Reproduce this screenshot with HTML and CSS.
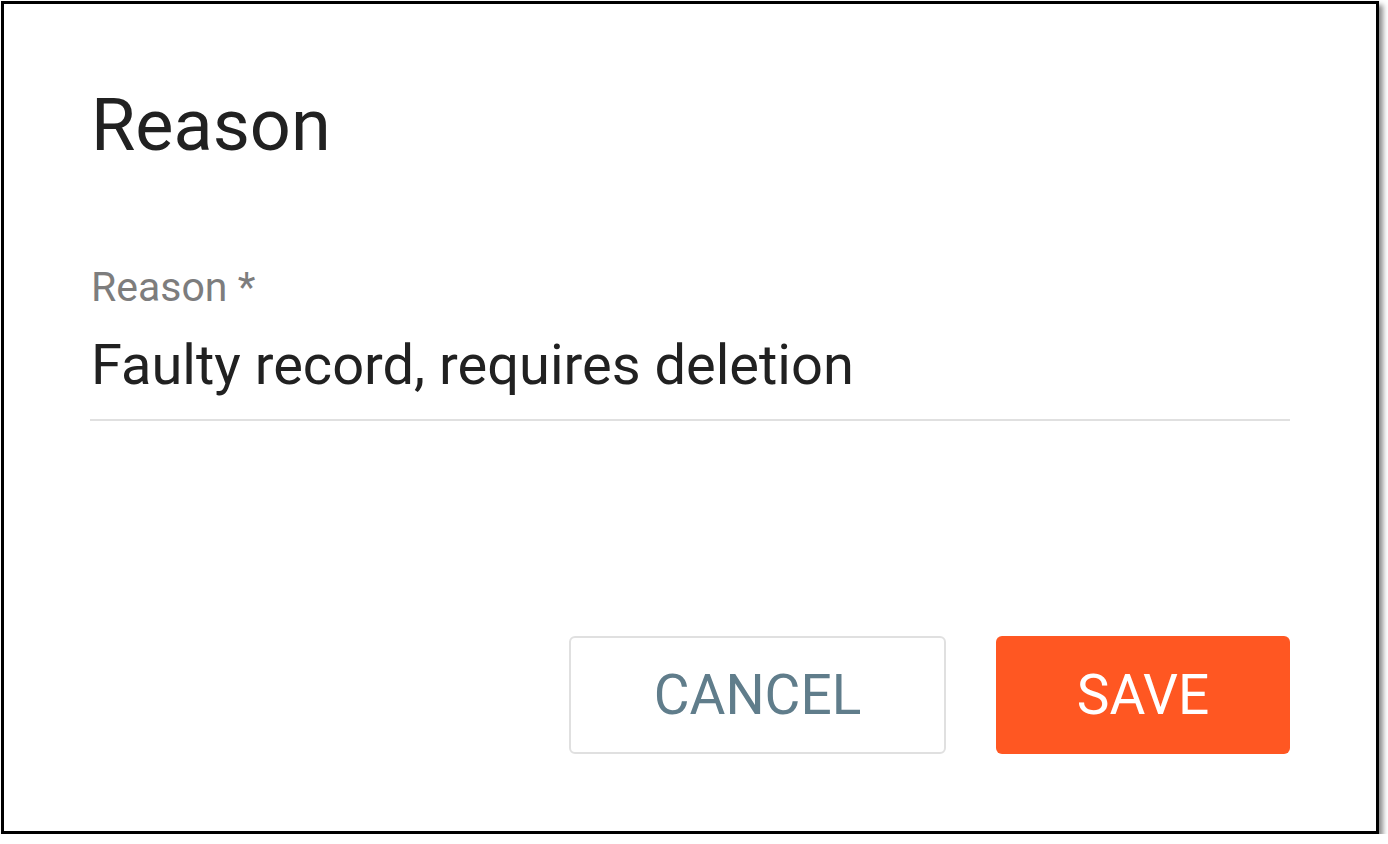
FILE: index.html
```html
<!DOCTYPE html>
<html>
<head>
<meta charset="utf-8">
<link rel="stylesheet" href="styles.css">
</head>
<body>
<div class="dialog">
  <h1 class="title">Reason</h1>
  <div class="field">
    <label class="label">Reason *</label>
    <div class="value">Faulty record, requires deletion</div>
  </div>
  <div class="actions">
    <button class="btn btn-cancel">CANCEL</button>
    <button class="btn btn-save">SAVE</button>
  </div>
</div>
</body>
</html>
```
FILE: styles.css
```css
html, body {
  margin: 0;
  padding: 0;
  background: #ffffff;
}
body {
  font-family: Roboto, "Liberation Sans", sans-serif;
  padding: 1px 0 0 1px;
}
.dialog {
  box-sizing: border-box;
  width: 1378px;
  height: 833px;
  border: 3px solid #000;
  background: #fff;
  box-shadow: 4px 4px 5px rgba(0, 0, 0, 0.45);
  padding: 86px 86px 77px 86px;
  display: flex;
  flex-direction: column;
}
.title {
  margin: 0;
  font-size: 72px;
  line-height: 72px;
  font-weight: 400;
  color: #212121;
  padding-left: 1px;
}
.field {
  margin-top: 105px;
  border-bottom: 2px solid #e0e0e0;
  padding-bottom: 26px;
}
.label {
  display: block;
  font-size: 41px;
  line-height: 40px;
  color: #7d7d7d;
  padding-left: 1px;
}
.value {
  margin-top: 30px;
  font-size: 56px;
  line-height: 56px;
  color: #212121;
  padding-left: 1px;
}
.actions {
  margin-top: auto;
  display: flex;
  justify-content: flex-end;
  gap: 50px;
}
.btn {
  box-sizing: border-box;
  height: 118px;
  font-family: Roboto, "Liberation Sans", sans-serif;
  font-size: 55px;
  font-weight: 400;
  border-radius: 6px;
  padding: 0;
  cursor: pointer;
}
.btn-cancel {
  width: 377px;
  background: #fff;
  border: 2px solid #e0e0e0;
  color: #607d8b;
}
.btn-save {
  width: 294px;
  background: #ff5722;
  border: none;
  color: #fff;
}
```
